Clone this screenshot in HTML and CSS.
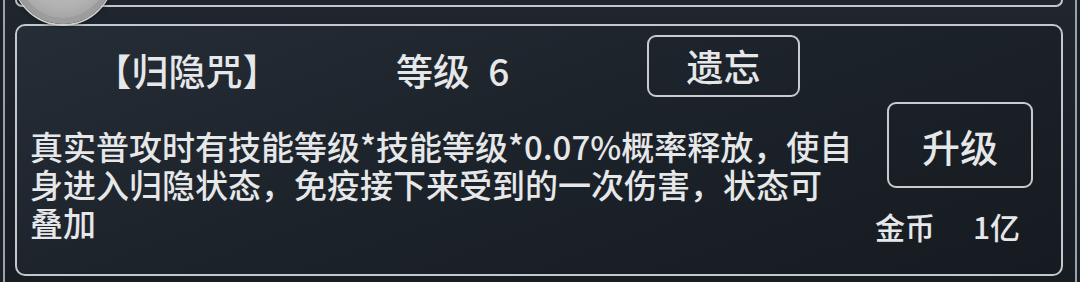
FILE: index.html
```html
<!DOCTYPE html>
<html lang="zh-CN">
<head>
  <meta charset="UTF-8">
  <meta name="viewport" content="width=device-width, initial-scale=1.0">
  <title>技能</title>
  <link rel="stylesheet" href="styles.css">
</head>
<body>
  <div class="frame">
    <div class="round-btn"></div>
    <div class="top-panel"></div>

    <div class="skill-card">
      <div class="skill-head">
        <div class="skill-name">【归隐咒】</div>
        <div class="skill-level">等级 6</div>
        <button class="btn btn-forget">遗忘</button>
      </div>
      <div class="skill-body">
        <p class="skill-desc">真实普攻时有技能等级*技能等级*0.07%概率释放，使自身进入归隐状态，免疫接下来受到的一次伤害，状态可叠加</p>
        <div class="skill-side">
          <button class="btn btn-upgrade">升级</button>
          <div class="cost">
            <span>金币</span>
            <span>1亿</span>
          </div>
        </div>
      </div>
    </div>
  </div>
</body>
</html>
```

FILE: styles.css
```css
/* skill panel */

body {
  margin: 0;
  width: 1080px;
  height: 282px;
  overflow: hidden;
  background: #1a2028;
  font-family: "Noto Sans CJK SC", "Noto Sans", sans-serif;
  font-weight: 500;
  color: #e6e7e8;
}

.frame {
  position: relative;
  box-sizing: border-box;
  height: 282px;
  margin: 0 3px;
  padding: 0 12px 0 10px;
  border-left: 2px solid #9da2a8;
  border-right: 2px solid #9da2a8;
  background: linear-gradient(180deg, #1f262e 0%, #181d24 100%);
}

.round-btn {
  position: absolute;
  left: 8px;
  top: -76px;
  width: 100px;
  height: 100px;
  box-sizing: border-box;
  border-radius: 50%;
  border: 6px solid #9c9c9c;
  background: radial-gradient(circle at 50% 40%, #c4c4c4 0%, #b2b2b2 60%, #969696 100%);
  box-shadow: 0 1px 0 1px #cfcfcf, 0 2px 4px rgba(0, 0, 0, 0.6);
  z-index: 2;
}

.top-panel {
  height: 5px;
  border: 2px solid #c4c7cb;
  border-top: none;
  border-radius: 0 0 8px 8px;
  margin-bottom: 17px;
}

.skill-card {
  box-sizing: border-box;
  height: 252px;
  padding: 9px 0 0 0;
  border: 2px solid #c4c7cb;
  border-radius: 10px;
  background: linear-gradient(160deg, #252d36 0%, #1d232b 45%, #161b21 100%);
}

.skill-head {
  display: flex;
  align-items: center;
  height: 62px;
  font-size: 37px;
}

.skill-name {
  width: 340px;
  text-align: center;
  padding-top: 8px;
}

.skill-level {
  width: 251px;
  margin-left: 39px;
  padding-top: 8px;
  word-spacing: 10px;
}

.btn {
  box-sizing: border-box;
  border: 2px solid #c9cbce;
  border-radius: 9px;
  background: transparent;
  color: #e6e7e8;
  font-family: "Noto Sans CJK SC", "Noto Sans", sans-serif;
  font-weight: 500;
  font-size: 37px;
  padding: 0;
}

.btn-forget {
  width: 153px;
  height: 62px;
}

.skill-body {
  display: flex;
}

.skill-desc {
  width: 823px;
  margin: 30px 0 0 13px;
  font-size: 33px;
  line-height: 38px;
}

.skill-side {
  margin-left: 22px;
  padding-top: 5px;
}

.btn-upgrade {
  display: block;
  width: 146px;
  height: 86px;
  margin-left: 12px;
  font-size: 38px;
}

.cost {
  display: flex;
  gap: 38px;
  margin-top: 22px;
  font-size: 30px;
  line-height: 32px;
}
```
